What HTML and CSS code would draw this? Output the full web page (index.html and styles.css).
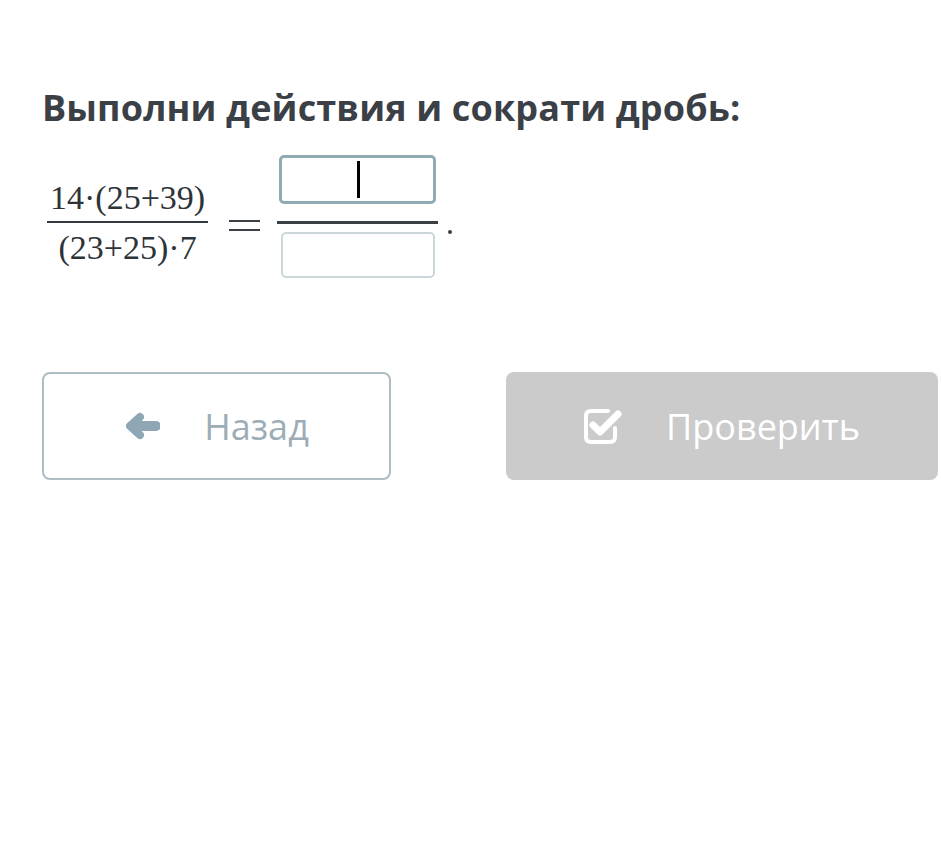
FILE: index.html
```html
<!DOCTYPE html>
<html lang="ru">
<head>
<meta charset="utf-8">
<link rel="stylesheet" href="styles.css">
</head>
<body>
<main class="page">
  <h1 class="title">Выполни действия и сократи дробь:</h1>
  <div class="math">
    <div class="frac frac-given">
      <div class="num">14·(25+39)</div>
      <div class="bar"></div>
      <div class="den">(23+25)·7</div>
    </div>
    <div class="equals"><span></span><span></span></div>
    <div class="frac frac-answer">
      <div class="box box-active"><span class="cursor"></span></div>
      <div class="bar bar-answer"></div>
      <div class="box box-empty"></div>
    </div>
    <div class="period"></div>
  </div>
  <div class="buttons">
    <button class="btn btn-back" type="button">
      <svg class="icon-arrow" width="36" height="28" viewBox="0 0 36 28" aria-hidden="true">
        <path d="M16 5 L6 14 L16 23" fill="none" stroke="#8fa6b4" stroke-width="8" stroke-linecap="round" stroke-linejoin="round"/>
        <path d="M8 14 H32" fill="none" stroke="#8fa6b4" stroke-width="10" stroke-linecap="round"/>
      </svg>
      <span>Назад</span>
    </button>
    <button class="btn btn-check" type="button">
      <svg class="icon-check" width="38" height="36" viewBox="0 0 38 36" aria-hidden="true">
        <path d="M31 20 V29 Q31 34 26 34 H7 Q2 34 2 29 V8 Q2 3 7 3 H24" fill="none" stroke="#fff" stroke-width="4" stroke-linecap="round"/>
        <path d="M9 17 L16 24 L34 6" fill="none" stroke="#fff" stroke-width="7" stroke-linecap="round" stroke-linejoin="round"/>
      </svg>
      <span>Проверить</span>
    </button>
  </div>
</main>
</body>
</html>
```
FILE: styles.css
```css
* { box-sizing: border-box; }
html, body { margin: 0; padding: 0; background: #fff; }
body { font-family: "Open Sans", "Noto Sans", sans-serif; }

.page {
  padding: 83px 0 0 42px;
}

.title {
  margin: 0;
  font-size: 36px;
  font-weight: 700;
  line-height: 50px;
  letter-spacing: 0.15px;
  color: #3b4047;
}

.math {
  display: flex;
  align-items: flex-start;
  margin-top: 22px;
  height: 123px;
}

.frac {
  display: flex;
  flex-direction: column;
  align-items: center;
}

.frac-given {
  margin: 26px 0 0 5px;
  font-family: "Liberation Serif", "DejaVu Serif", serif;
  font-size: 34px;
  color: #2e3338;
}
.num, .den { line-height: 34px; white-space: nowrap; }
.num { padding: 0 3px 6px; }
.den { padding: 8px 3px 0; }

.bar {
  align-self: stretch;
  height: 2px;
  background: #34393f;
}

.equals {
  display: flex;
  flex-direction: column;
  justify-content: space-between;
  width: 31px;
  height: 11px;
  margin: 65px 17px 0 21px;
}
.equals span { height: 2px; background: #3b4047; }

.frac-answer { width: 161px; }
.bar-answer { height: 3px; margin: 17px 0 8px; background: #3b4047; }

.box {
  position: relative;
  border-radius: 5px;
  background: #fff;
}
.box-active {
  width: 157px;
  height: 49px;
  border: 3px solid #8fabb4;
}
.box-empty {
  width: 154px;
  height: 46px;
  border: 2px solid #cbd7da;
}
.cursor {
  position: absolute;
  left: 75px;
  top: 3px;
  width: 3px;
  height: 37px;
  background: #000;
}

.period {
  width: 4px;
  height: 4px;
  border-radius: 50%;
  background: #3b4047;
  margin: 75px 0 0 10px;
}

.buttons {
  display: flex;
  margin-top: 94px;
}

.btn {
  display: flex;
  align-items: center;
  justify-content: center;
  gap: 44px;
  height: 108px;
  border-radius: 8px;
  font-family: "Open Sans", "Noto Sans", sans-serif;
  font-size: 36px;
  cursor: pointer;
}
.btn-back {
  width: 349px;
  border: 2px solid #aebcc3;
  background: #fff;
  color: #9cadb7;
}
.btn-check {
  width: 432px;
  margin-left: 115px;
  border: none;
  background: #cbcbcb;
  color: #fff;
}
.icon-arrow, .icon-check { flex: none; }
```
